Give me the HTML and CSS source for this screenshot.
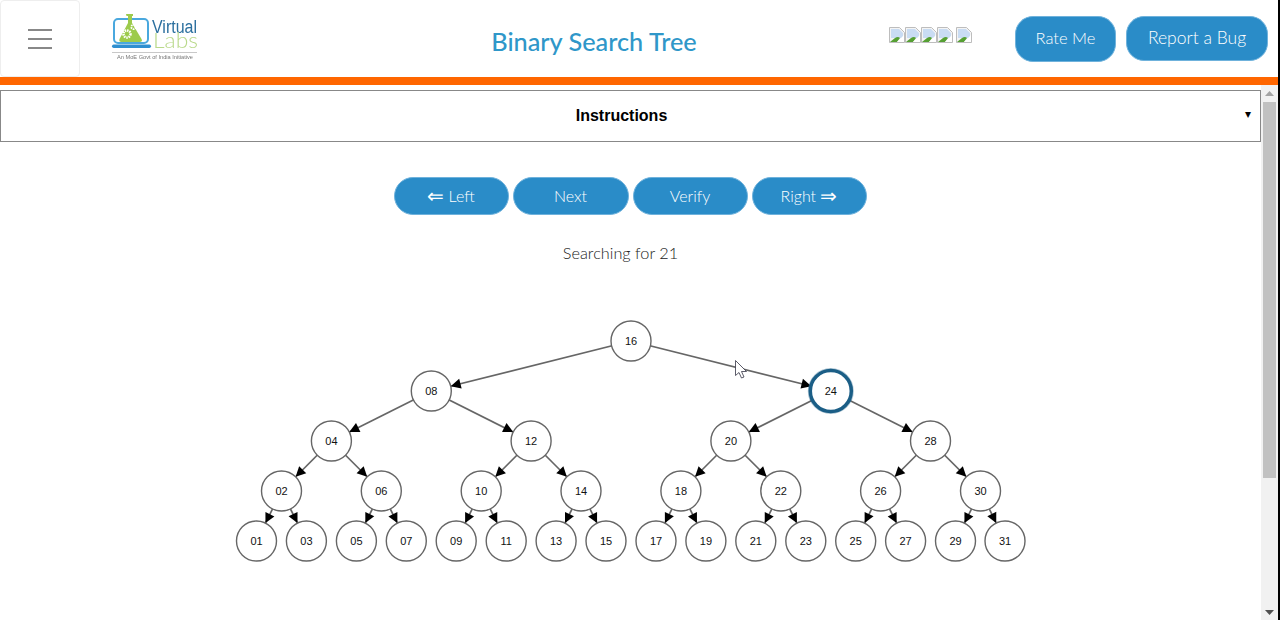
FILE: index.html
```html
<!DOCTYPE html>
<html lang="en">
<head>
<meta charset="utf-8">
<title>Binary Search Tree</title>
<link rel="stylesheet" href="styles.css">
</head>
<body>
<div class="window">
  <div class="app">
    <header class="topbar">
      <button class="menu-btn" aria-label="Menu"><span></span><span></span><span></span></button>
      <svg class="logo" viewBox="110 12 92 52" width="92" height="52">
        <rect class="logo-screen" x="114" y="19" width="34" height="24" rx="4"/>
        <rect class="logo-base" x="112" y="44.500" width="39" height="3.500" rx="1.700"/>
        <path class="logo-flask" d="M126 14h7v2h-1v7l9.500 16q1.500 3-2 3h-18q-3 0-2-3l8.500-16v-7h-1.500z"/>
        <circle class="logo-gear" cx="127" cy="34" r="3.500"/>
        <circle class="logo-gear small" cx="133.500" cy="27" r="2.200"/>
        <text class="logo-virtual" x="152" y="33" textLength="45" lengthAdjust="spacingAndGlyphs">Virtual</text>
        <text class="logo-labs" x="153" y="48" textLength="45" lengthAdjust="spacingAndGlyphs">Labs</text>
        <line class="logo-rule" x1="112" y1="52.500" x2="197" y2="52.500"/>
        <text class="logo-tag" x="117" y="59" textLength="76" lengthAdjust="spacingAndGlyphs">An MoE Govt of India Initiative</text>
      </svg>
      <h1 class="title">Binary Search Tree</h1>
      <div class="rating">
        <svg class="star" viewBox="0 0 16 16" width="16" height="16"><path class="bi-page" d="M.500.500h10l5 5v10h-15z"/><path class="bi-sky" d="M2 2h8l4 4v5H2z"/><path class="bi-hill" d="M1 15l5-4q3-2 5 0l-3 4z"/><path class="bi-tear" d="M8 15l7-7v7z"/></svg>
        <svg class="star" viewBox="0 0 16 16" width="16" height="16"><path class="bi-page" d="M.500.500h10l5 5v10h-15z"/><path class="bi-sky" d="M2 2h8l4 4v5H2z"/><path class="bi-hill" d="M1 15l5-4q3-2 5 0l-3 4z"/><path class="bi-tear" d="M8 15l7-7v7z"/></svg>
        <svg class="star" viewBox="0 0 16 16" width="16" height="16"><path class="bi-page" d="M.500.500h10l5 5v10h-15z"/><path class="bi-sky" d="M2 2h8l4 4v5H2z"/><path class="bi-hill" d="M1 15l5-4q3-2 5 0l-3 4z"/><path class="bi-tear" d="M8 15l7-7v7z"/></svg>
        <svg class="star" viewBox="0 0 16 16" width="16" height="16"><path class="bi-page" d="M.500.500h10l5 5v10h-15z"/><path class="bi-sky" d="M2 2h8l4 4v5H2z"/><path class="bi-hill" d="M1 15l5-4q3-2 5 0l-3 4z"/><path class="bi-tear" d="M8 15l7-7v7z"/></svg>
        <svg class="star star-last" viewBox="0 0 16 16" width="16" height="16"><path class="bi-page" d="M.500.500h10l5 5v10h-15z"/><path class="bi-sky" d="M2 2h8l4 4v5H2z"/><path class="bi-hill" d="M1 15l5-4q3-2 5 0l-3 4z"/><path class="bi-tear" d="M8 15l7-7v7z"/></svg>
      </div>
      <button class="head-btn rate">Rate Me</button>
      <button class="head-btn bug">Report a Bug</button>
    </header>
    <div class="stripe"></div>
    <div class="body-row">
      <main class="content">
        <div class="instructions"><b>Instructions</b><span class="caret">▾</span></div>
        <div class="controls">
          <button class="ctl ctl-a"><span class="dbl-arrow">⇐</span> Left</button>
          <button class="ctl ctl-b">Next</button>
          <button class="ctl ctl-a">Verify</button>
          <button class="ctl ctl-a">Right <span class="dbl-arrow">⇒</span></button>
        </div>
        <p class="status">Searching for 21</p>
        <svg class="tree" viewBox="0 310 1261 300" width="1261" height="300">
          <defs>
            <marker id="arrow" markerUnits="userSpaceOnUse" markerWidth="12" markerHeight="12" refX="30" refY="6" orient="auto" overflow="visible">
              <path d="M0 1L10 6 0 11z" fill="#000"/>
            </marker>
          </defs>
          <g class="edges" marker-end="url(#arrow)">
            <line x1="631" y1="341" x2="431.300" y2="391"/><line x1="631" y1="341" x2="830.800" y2="391"/>
            <line x1="431.300" y1="391" x2="331.400" y2="441"/><line x1="431.300" y1="391" x2="531.100" y2="441"/>
            <line x1="830.800" y1="391" x2="730.900" y2="441"/><line x1="830.800" y1="391" x2="930.500" y2="441"/>
            <line x1="331.400" y1="441" x2="281.500" y2="491"/><line x1="331.400" y1="441" x2="381.300" y2="491"/>
            <line x1="531.100" y1="441" x2="481.200" y2="491"/><line x1="531.100" y1="441" x2="581" y2="491"/>
            <line x1="730.900" y1="441" x2="680.900" y2="491"/><line x1="730.900" y1="441" x2="780.800" y2="491"/>
            <line x1="930.500" y1="441" x2="880.600" y2="491"/><line x1="930.500" y1="441" x2="980.500" y2="491"/>
            <line x1="281.500" y1="491" x2="256.500" y2="541"/><line x1="281.500" y1="491" x2="306.400" y2="541"/>
            <line x1="381.300" y1="491" x2="356.400" y2="541"/><line x1="381.300" y1="491" x2="406.300" y2="541"/>
            <line x1="481.200" y1="491" x2="456.200" y2="541"/><line x1="481.200" y1="491" x2="506.200" y2="541"/>
            <line x1="581" y1="491" x2="556.100" y2="541"/><line x1="581" y1="491" x2="606" y2="541"/>
            <line x1="680.900" y1="491" x2="656" y2="541"/><line x1="680.900" y1="491" x2="705.900" y2="541"/>
            <line x1="780.800" y1="491" x2="755.800" y2="541"/><line x1="780.800" y1="491" x2="805.800" y2="541"/>
            <line x1="880.600" y1="491" x2="855.700" y2="541"/><line x1="880.600" y1="491" x2="905.600" y2="541"/>
            <line x1="980.500" y1="491" x2="955.500" y2="541"/><line x1="980.500" y1="491" x2="1005" y2="541"/>
          </g>
          <g class="nodes">
            <circle cx="631" cy="341" r="20"/><text x="631" y="344.500">16</text>
            <circle cx="431.300" cy="391" r="20"/><text x="431.300" y="394.500">08</text>
            <circle class="current-glow" cx="830.800" cy="391" r="20.500"/><circle class="current" cx="830.800" cy="391" r="20.500"/><text x="830.800" y="394.500">24</text>
            <circle cx="331.400" cy="441" r="20"/><text x="331.400" y="444.500">04</text>
            <circle cx="531.100" cy="441" r="20"/><text x="531.100" y="444.500">12</text>
            <circle cx="730.900" cy="441" r="20"/><text x="730.900" y="444.500">20</text>
            <circle cx="930.500" cy="441" r="20"/><text x="930.500" y="444.500">28</text>
            <circle cx="281.500" cy="491" r="20"/><text x="281.500" y="494.500">02</text>
            <circle cx="381.300" cy="491" r="20"/><text x="381.300" y="494.500">06</text>
            <circle cx="481.200" cy="491" r="20"/><text x="481.200" y="494.500">10</text>
            <circle cx="581" cy="491" r="20"/><text x="581" y="494.500">14</text>
            <circle cx="680.900" cy="491" r="20"/><text x="680.900" y="494.500">18</text>
            <circle cx="780.800" cy="491" r="20"/><text x="780.800" y="494.500">22</text>
            <circle cx="880.600" cy="491" r="20"/><text x="880.600" y="494.500">26</text>
            <circle cx="980.500" cy="491" r="20"/><text x="980.500" y="494.500">30</text>
            <circle cx="256.500" cy="541" r="20"/><text x="256.500" y="544.500">01</text>
            <circle cx="306.400" cy="541" r="20"/><text x="306.400" y="544.500">03</text>
            <circle cx="356.400" cy="541" r="20"/><text x="356.400" y="544.500">05</text>
            <circle cx="406.300" cy="541" r="20"/><text x="406.300" y="544.500">07</text>
            <circle cx="456.200" cy="541" r="20"/><text x="456.200" y="544.500">09</text>
            <circle cx="506.200" cy="541" r="20"/><text x="506.200" y="544.500">11</text>
            <circle cx="556.100" cy="541" r="20"/><text x="556.100" y="544.500">13</text>
            <circle cx="606" cy="541" r="20"/><text x="606" y="544.500">15</text>
            <circle cx="656" cy="541" r="20"/><text x="656" y="544.500">17</text>
            <circle cx="705.900" cy="541" r="20"/><text x="705.900" y="544.500">19</text>
            <circle cx="755.800" cy="541" r="20"/><text x="755.800" y="544.500">21</text>
            <circle cx="805.800" cy="541" r="20"/><text x="805.800" y="544.500">23</text>
            <circle cx="855.700" cy="541" r="20"/><text x="855.700" y="544.500">25</text>
            <circle cx="905.600" cy="541" r="20"/><text x="905.600" y="544.500">27</text>
            <circle cx="955.500" cy="541" r="20"/><text x="955.500" y="544.500">29</text>
            <circle cx="1005" cy="541" r="20"/><text x="1005" y="544.500">31</text>
          </g>
        </svg>
        <svg class="pointer" viewBox="0 0 12 19" width="12" height="19"><path d="M.500.500v15l3.500-3 2.500 5.500 2.500-1-2.500-5.500h5z"/></svg>
      </main>
      <div class="scrollbar">
        <svg class="sb-arrow" viewBox="0 0 9 5" width="9" height="5"><path d="M4.500 0l4.500 5H0z"/></svg>
        <div class="sb-track"><div class="sb-thumb"></div></div>
        <svg class="sb-arrow" viewBox="0 0 9 5" width="9" height="5"><path d="M0 0h9L4.500 5z"/></svg>
      </div>
    </div>
  </div>
  <div class="edge"></div>
</div>
</body>
</html>
```
FILE: styles.css
```css
* { box-sizing: border-box; }
html, body { margin: 0; height: 100%; overflow: hidden; background: #fff; }
body { font-family: "Liberation Sans", Arial, sans-serif; color: #333; }
button { font-family: Lato, "Open Sans", sans-serif; cursor: pointer; }

.window { display: flex; width: 1280px; height: 620px; }
.app { width: 1278px; display: flex; flex-direction: column; }
.edge { width: 2px; background: #000; }

.topbar { display: flex; align-items: flex-start; height: 77px; flex: none; }
.menu-btn {
  width: 80px; height: 77px; flex: none; background: #fff;
  border: 1px solid #eee; border-radius: 4px; padding: 0;
  display: flex; flex-direction: column; align-items: center; justify-content: center; gap: 7px;
}
.menu-btn span { display: block; width: 24px; height: 2px; background: #888; }

.logo { flex: none; margin: 12px 0 0 30px; filter: blur(.4px); }
.logo-screen { fill: none; stroke: #4aa8de; stroke-width: 2; }
.logo-base { fill: #2f8fd0; }
.logo-flask { fill: #9dcb4c; }
.logo-gear { fill: none; stroke: #fff; stroke-width: 2.500; stroke-dasharray: 1.500 .8; }
.logo-gear.small { stroke-width: 1.800; }
.logo-virtual { font-family: "Liberation Sans", sans-serif; font-size: 18px; fill: #2b6f9e; }
.logo-labs { font-family: Lato, sans-serif; font-weight: 300; font-size: 21px; fill: #b9d98a; }
.logo-rule { stroke: #c8c8c8; stroke-width: 1; }
.logo-tag { font-family: "Liberation Sans", sans-serif; font-size: 5px; fill: #777; }

.title {
  flex: none; width: 226px; margin: 26px 0 0 279px; text-align: center;
  font-family: Lato, sans-serif; font-weight: 500; font-size: 25.300px; line-height: 30px;
  color: #2f97c9; white-space: nowrap;
}

.rating { display: flex; flex: none; margin: 27px 0 0 182px; width: 126px; }
.star { flex: none; display: block; }
.star-last { margin-left: 3px; }
.bi-page { fill: #f4f4f4; stroke: #bdbdbd; }
.bi-sky { fill: #c9dcf3; }
.bi-hill { fill: #56a033; }
.bi-tear { fill: #fff; }

.head-btn {
  flex: none; margin-top: 16px; background: #2a8cc8; color: #fff;
  border: 1px solid #6fb2dc; border-radius: 18px; font-size: 17px; font-weight: 300; padding: 0 0 2px;
}
.rate { width: 101px; height: 46px; font-size: 16.500px; }
.bug { width: 142px; height: 45px; margin-left: 10px; font-size: 17.500px; }

.stripe { height: 8px; flex: none; background: #f60; }

.body-row { display: flex; flex: 1; min-height: 0; }
.content { position: relative; width: 1261px; flex: none; padding-top: 5px; overflow: hidden; }

.instructions {
  display: flex; align-items: center; justify-content: center; position: relative;
  height: 52px; border: 1px solid #888; padding-right: 18px; font-size: 16px; color: #000;
}
.caret { position: absolute; right: 9px; top: 15px; font-size: 12px; line-height: 16px; }

.controls { display: flex; justify-content: center; gap: 4px; margin-top: 35px; padding-right: 1px; }
.ctl {
  width: 115px; height: 38px; background: #2a8cc8; color: #fff;
  border: 1px solid #6fb2dc; border-radius: 19px; font-size: 16px; font-weight: 300; padding: 0 0 1px;
}
.ctl-b { width: 116px; }
.dbl-arrow { font-family: "DejaVu Sans", sans-serif; font-size: 20px; font-weight: 200; line-height: 1; vertical-align: -1px; }

.status { margin: 28px 0 0; padding-right: 20px; text-align: center; font-family: Lato, sans-serif; font-size: 16.300px; font-weight: 300; line-height: 20px; color: #222; }

.tree { display: block; margin-top: 47px; }
.edges line { stroke: #666; stroke-width: 1.700; }
.nodes circle { fill: #fff; stroke: #666; stroke-width: 1.400; }
.nodes text { font-family: "Liberation Sans", sans-serif; font-size: 11px; text-anchor: middle; fill: #111; }
.nodes .current { stroke: #1b5e86; stroke-width: 3.500; }
.nodes .current-glow { stroke: #1b5e86; stroke-width: 5; opacity: .35; }

.pointer { position: absolute; left: 735px; top: 275px; }
.pointer path { fill: #fff; stroke: #334; stroke-width: .8; }

.scrollbar { width: 17px; flex: none; background: #f1f1f1; display: flex; flex-direction: column; align-items: center; padding: 6px 0 5px; }
.sb-arrow { flex: none; fill: #a3a3a3; display: block; }
.sb-arrow:last-child { fill: #505050; }
.sb-track { flex: 1; width: 100%; padding-top: 6px; }
.sb-thumb { height: 376px; margin: 0 2px; background: #c1c1c1; }
```
